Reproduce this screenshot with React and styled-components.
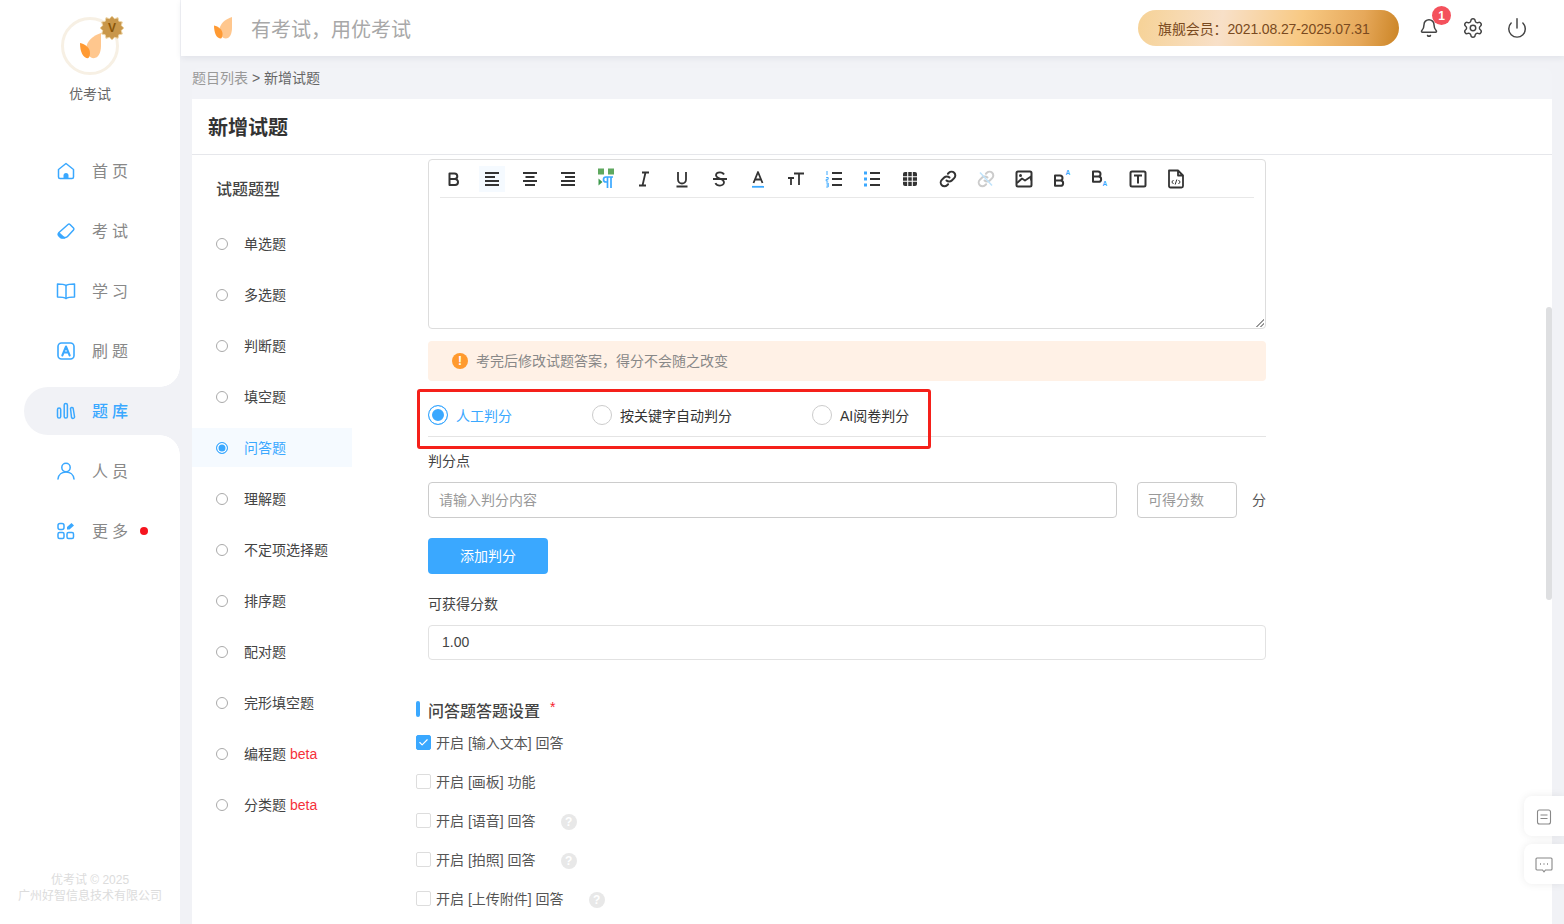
import React from 'react';
import styled, { createGlobalStyle } from 'styled-components';
import { Bell, Settings, Power, Check } from 'lucide-react';

const BLUE = '#3aa8ff';
const PAGE = '#f1f2f6';

const GlobalStyle = createGlobalStyle`
  html, body { margin: 0; padding: 0; height: 100%; background: ${PAGE}; }
  body { font-family: "Liberation Sans", "Noto Sans CJK SC", sans-serif; font-size: 14px; color: #333; overflow: hidden; }
  * { box-sizing: border-box; }
`;

const Page = styled.div`
  position: relative;
  display: flex;
  width: 100%;
  height: 924px;
  overflow: hidden;
  background: ${PAGE};
`;

/* the CJK face sits a little low, this lifts a label back onto its icon */
const Label = styled.span`
  padding-bottom: 2px;
`;

/* sidebar */
const Sidebar = styled.aside`
  width: 180px;
  flex: none;
  display: flex;
  flex-direction: column;
  background: #fff;
`;
const Brand = styled.div`
  display: flex;
  flex-direction: column;
  align-items: center;
  padding-top: 17px;
  height: 147px;
`;
const Avatar = styled.div`
  position: relative;
  width: 58px;
  height: 58px;
  border: 3px solid #f7f0e4;
  border-radius: 50%;
  display: flex;
  align-items: center;
  justify-content: center;
`;
const VBadge = styled.div`
  position: absolute;
  top: -4px;
  right: -8px;
  width: 24px;
  height: 24px;
`;
const VLetter = styled.span`
  position: absolute;
  inset: 0;
  display: flex;
  align-items: center;
  justify-content: center;
  font-size: 12px;
  font-weight: 700;
  color: #8a5608;
`;
const BrandName = styled.div`
  margin-top: 9px;
  font-size: 14px;
  line-height: 20px;
  color: #666;
`;
const Nav = styled.nav`
  display: flex;
  flex-direction: column;
  gap: 12px;
  padding-left: 24px;
`;
const NavItem = styled.div`
  position: relative;
  height: 48px;
  display: flex;
  align-items: center;
  gap: 16px;
  padding-left: 32px;
  font-size: 16px;
  letter-spacing: 4px;
  color: ${(p) => (p.$active ? BLUE : '#888')};
  font-weight: ${(p) => (p.$active ? 500 : 400)};
  background: ${(p) => (p.$active ? PAGE : 'transparent')};
  border-radius: 24px 0 0 24px;
  ${(p) => p.$active && `
    &::before, &::after {
      content: '';
      position: absolute;
      right: 0;
      width: 20px;
      height: 20px;
    }
    &::before {
      top: -20px;
      background: radial-gradient(circle at 0 0, transparent 19.5px, ${PAGE} 20px);
    }
    &::after {
      bottom: -20px;
      background: radial-gradient(circle at 0 100%, transparent 19.5px, ${PAGE} 20px);
    }
  `}
`;
const NavDot = styled.i`
  width: 8px;
  height: 8px;
  border-radius: 50%;
  background: #f5141e;
  margin-left: -8px;
`;
const SideFoot = styled.div`
  margin-top: auto;
  padding-bottom: 20px;
  text-align: center;
  font-size: 12px;
  line-height: 16px;
  color: #dcdcdc;
`;

/* main column */
const Main = styled.div`
  flex: 1;
  min-width: 0;
  margin-left: 1px;
  display: flex;
  flex-direction: column;
`;
const Header = styled.header`
  height: 56px;
  flex: none;
  display: flex;
  align-items: center;
  padding: 0 36px 0 33px;
  background: #fff;
  box-shadow: 0 2px 6px rgba(40, 50, 80, 0.08);
  position: relative;
`;
const Slogan = styled.div`
  margin-left: 19px;
  font-size: 20px;
  color: #a8a8a8;
`;
const Member = styled.div`
  margin-left: auto;
  width: 261px;
  height: 36px;
  padding-left: 20px;
  display: flex;
  align-items: center;
  border-radius: 18px;
  font-size: 14px;
  letter-spacing: -0.12px;
  color: #7a4a20;
  background: linear-gradient(100deg, #f6d296 0%, #f8e0c8 32%, #f8c983 62%, #e6a85a 85%, #cb8425 100%);
`;
const HeadIcons = styled.div`
  display: flex;
  align-items: center;
  gap: 22px;
  margin-left: 19px;
  color: #444;
`;
const HeadIcon = styled.div`
  position: relative;
  width: 22px;
  height: 22px;
  display: flex;
  align-items: center;
  justify-content: center;
`;
const Count = styled.span`
  position: absolute;
  top: -11px;
  left: 14px;
  width: 19px;
  height: 19px;
  border-radius: 50%;
  background: #f4515c;
  color: #fff;
  font-size: 12px;
  font-weight: 700;
  display: flex;
  align-items: center;
  justify-content: center;
`;

const Crumbs = styled.div`
  margin: 12px 12px 0 11px;
  height: 31px;
  line-height: 20px;
  font-size: 14px;
  color: #666;
  border-radius: 8px 8px 0 0;
  background: #f2f3f7;
`;
const CrumbLink = styled.span`
  color: #999;
`;
const Card = styled.div`
  margin: 0 12px 0 11px;
  flex: 1;
  min-height: 0;
  display: flex;
  flex-direction: column;
  background: #fff;
`;
const CardTitle = styled.h1`
  margin: 0;
  height: 56px;
  flex: none;
  padding: 0 16px;
  display: flex;
  align-items: center;
  font-size: 20px;
  font-weight: 700;
  color: #333;
  border-bottom: 1px solid #e6e7eb;
`;
const CardBody = styled.div`
  flex: 1;
  min-height: 0;
  display: flex;
  overflow: hidden;
`;

/* question type list */
const Types = styled.div`
  width: 160px;
  flex: none;
`;
const TypesTitle = styled.div`
  height: 24px;
  margin: 23px 0 22px 24px;
  font-size: 16px;
  line-height: 24px;
  font-weight: 500;
  color: #444;
`;
const TypeRow = styled.div`
  height: 39px;
  margin-bottom: 12px;
  display: flex;
  align-items: center;
  padding-left: 24px;
  gap: 16px;
  font-size: 14px;
  color: ${(p) => (p.$active ? BLUE : '#444')};
  background: ${(p) => (p.$active ? '#f5faff' : 'transparent')};
`;
const TypeRadio = styled.i`
  width: 12px;
  height: 12px;
  flex: none;
  border-radius: 50%;
  border: 1px solid ${(p) => (p.$active ? BLUE : '#aaa')};
  background: ${(p) => (p.$active ? BLUE : '#fff')};
  box-shadow: ${(p) => (p.$active ? 'inset 0 0 0 1.5px #fff' : 'none')};
`;
const Beta = styled.span`
  color: #f5313a;
  margin-left: 4px;
`;

/* form column */
const Form = styled.div`
  width: 850px;
  margin-left: 64px;
  padding: 4px 0 0 12px;
  flex: none;
`;
const Editor = styled.div`
  position: relative;
  height: 170px;
  border: 1px solid #ddd;
  border-radius: 4px;
  padding: 0 11px;
`;
const Toolbar = styled.div`
  height: 38px;
  display: flex;
  align-items: center;
  gap: 12px;
  border-bottom: 1px solid #e8e8e8;
  padding-left: 1px;
`;
const ToolButton = styled.span`
  width: 26px;
  height: 26px;
  flex: none;
  display: flex;
  align-items: center;
  justify-content: center;
  background: ${(p) => (p.$hover ? '#f5faff' : 'transparent')};
`;
const Grip = styled.span`
  position: absolute;
  right: 1px;
  bottom: 1px;
  width: 8px;
  height: 8px;
  background: linear-gradient(135deg, transparent 50%, #999 50%, #999 60%, transparent 60%, transparent 75%, #999 75%, #999 85%, transparent 85%);
`;
const Notice = styled.div`
  margin-top: 12px;
  height: 40px;
  padding-left: 24px;
  display: flex;
  align-items: center;
  gap: 8px;
  border-radius: 4px;
  background: #fff1e6;
  color: #888;
`;
const NoticeMark = styled.i`
  width: 16px;
  height: 16px;
  border-radius: 50%;
  background: #ff9a2e;
  color: #fff;
  font-style: normal;
  font-weight: 700;
  font-size: 12px;
  display: flex;
  align-items: center;
  justify-content: center;
`;
const JudgeTabs = styled.div`
  position: relative;
  display: grid;
  grid-template-columns: 164px 220px 1fr;
  padding: 24px 0 11px;
  border-bottom: 1px solid #e4e4e4;
`;
const Judge = styled.label`
  display: flex;
  align-items: center;
  gap: 8px;
  height: 20px;
  color: ${(p) => (p.$active ? BLUE : '#333')};
`;
const JudgeRadio = styled.i`
  width: 20px;
  height: 20px;
  flex: none;
  border-radius: 50%;
  border: 1px solid ${(p) => (p.$active ? BLUE : '#ccc')};
  background: ${(p) => (p.$active ? BLUE : '#fff')};
  box-shadow: ${(p) => (p.$active ? 'inset 0 0 0 3px #fff' : 'none')};
`;
const RedFrame = styled.div`
  position: absolute;
  left: -11px;
  top: 8px;
  width: 514px;
  height: 60px;
  border: 3px solid #f5201a;
  border-radius: 3px;
  pointer-events: none;
`;
const FieldLabel = styled.div`
  margin-top: ${(p) => p.$top}px;
  line-height: 20px;
  color: #444;
`;
const InputRow = styled.div`
  margin-top: 11px;
  display: flex;
  align-items: center;
`;
const TextBox = styled.div`
  height: ${(p) => p.$h || 36}px;
  width: ${(p) => p.$w || 'auto'};
  margin-left: ${(p) => p.$left || 0}px;
  padding: 0 ${(p) => p.$pad || 10}px 2px;
  display: flex;
  align-items: center;
  border: 1px solid #ccc;
  border-radius: 4px;
  color: ${(p) => (p.$filled ? '#444' : '#999')};
  ${(p) => p.$filled && 'border-color: #e2e2e2;'}
`;
const Unit = styled.span`
  margin-left: auto;
  padding-bottom: 2px;
  color: #555;
`;
const AddButton = styled.button`
  display: block;
  margin-top: 20px;
  width: 120px;
  height: 36px;
  padding: 0 0 2px;
  border: 0;
  border-radius: 4px;
  background: ${BLUE};
  color: #fff;
  font: inherit;
`;
const SectionHead = styled.div`
  position: relative;
  margin-top: 39px;
  height: 22px;
  display: flex;
  align-items: center;
  font-size: 16px;
  font-weight: 500;
  color: #444;
  &::before {
    content: '';
    position: absolute;
    left: -12px;
    top: 2px;
    width: 4px;
    height: 16px;
    border-radius: 2px;
    background: ${BLUE};
  }
`;
const Star = styled.span`
  color: #f5222d;
  font-size: 14px;
  margin: -6px 0 0 10px;
`;
const Options = styled.div`
  margin: 2px 0 0 -12px;
`;
const OptionRow = styled.div`
  height: 39px;
  display: flex;
  align-items: center;
  color: #555;
`;
const Tick = styled.span`
  width: 15px;
  height: 15px;
  margin-right: 5px;
  flex: none;
  display: flex;
  align-items: center;
  justify-content: center;
  border-radius: 2px;
  border: 1px solid ${(p) => (p.$on ? BLUE : '#ddd')};
  background: ${(p) => (p.$on ? BLUE : '#fff')};
  color: #fff;
`;
const Help = styled.i`
  width: 16px;
  height: 16px;
  margin: 2px 0 0 25px;
  border-radius: 50%;
  background: #e8e8e8;
  color: #fff;
  font-style: normal;
  font-weight: 700;
  font-size: 12px;
  display: flex;
  align-items: center;
  justify-content: center;
`;

/* things lying over the page */
const ScrollThumb = styled.div`
  position: absolute;
  left: 1546px;
  top: 307px;
  width: 6px;
  height: 293px;
  border-radius: 3px;
  background: #dedfe1;
`;
const Floats = styled.div`
  position: absolute;
  right: 0;
  top: 796px;
  display: flex;
  flex-direction: column;
  gap: 8px;
`;
const FloatBtn = styled.div`
  width: 40px;
  height: 40px;
  padding-top: 2px;
  display: flex;
  align-items: center;
  justify-content: center;
  background: #fff;
  border-radius: 8px 0 0 8px;
  box-shadow: 0 0 8px rgba(0, 0, 0, 0.08);
`;

const Leaf = ({ size = 20 }) => (
  <svg width={size} height={size * 1.2} viewBox="0 0 20 24">
    <path d="M20 0C12 2.500 6.500 8 6 14 5.700 19 9 24 13 24 17.500 24 20 19 20 12Z" fill="#ffc78e" />
    <path d="M0 9.500C5 10.500 9.500 14 9.500 19 9.500 22 8.500 24 7.500 24 3 24 0 18 0 9.500Z" fill="#ff9a33" />
  </svg>
);

const VStar = () => {
  const pts = [];
  for (let i = 0; i < 24; i++) {
    const r = i % 2 ? 9.6 : 12;
    const a = (i * Math.PI) / 12;
    pts.push(`${(12 + r * Math.cos(a)).toFixed(2)},${(12 + r * Math.sin(a)).toFixed(2)}`);
  }
  return (
    <svg width="24" height="24" viewBox="0 0 24 24">
      <polygon points={pts.join(' ')} fill="#c9974a" stroke="#eed7ab" strokeWidth="1" />
    </svg>
  );
};

const NavSvg = ({ children }) => (
  <svg width="20" height="20" viewBox="0 0 20 20" fill="none" stroke={BLUE} strokeWidth="1.5" strokeLinecap="round" strokeLinejoin="round" style={{ flex: 'none' }}>
    {children}
  </svg>
);

const navIcons = {
  home: (
    <NavSvg>
      <path d="M2.500 8.500 10 2.500l7.500 6V16A1.500 1.500 0 0 1 16 17.500H4A1.500 1.500 0 0 1 2.500 16Z" />
      <path d="M7.500 17.500v-3a2.500 2.500 0 0 1 5 0v3Z" fill={BLUE} stroke="none" />
    </NavSvg>
  ),
  exam: (
    <NavSvg>
      <path d="M12 3.500a1.500 1.500 0 0 1 2 0l3.500 3.500a1.500 1.500 0 0 1 0 2l-6 6.500a3 3 0 0 1-2 1H6a3 3 0 0 1-2-1l-1-1a2 2 0 0 1 0-3Z" />
      <path d="M3 12l5.500 5H6a3 3 0 0 1-2-1l-1-1a2 2 0 0 1 0-3Z" fill={BLUE} />
    </NavSvg>
  ),
  study: (
    <NavSvg>
      <path d="M10 4.500C8 3 5 3 1.500 3v13c3.500 0 6.500 0 8.500 1.500 2-1.500 5-1.500 8.500-1.500V3C15 3 12 3 10 4.500Z" />
      <path d="M10 4.500v13" />
    </NavSvg>
  ),
  drill: (
    <NavSvg>
      <rect x="2" y="2" width="16" height="16" rx="3.500" strokeWidth="1.600" />
      <path d="M6.300 14.500 10 5.500l3.700 9M7.500 11.500h5" strokeWidth="2" />
    </NavSvg>
  ),
  bank: (
    <NavSvg>
      <rect x="1.500" y="7" width="3.200" height="10" rx="1.600" />
      <rect x="8.200" y="2.500" width="3.200" height="14.500" rx="1.600" />
      <path d="M14.500 7.500a1.500 1.500 0 0 1 2.600-.5l1.400 8.500a1.500 1.500 0 0 1-3 .8Z" />
    </NavSvg>
  ),
  people: (
    <NavSvg>
      <circle cx="10" cy="6.500" r="4.200" />
      <path d="M2 18c.5-4.500 4-7 8-7s7.500 2.500 8 7" />
    </NavSvg>
  ),
  more: (
    <NavSvg>
      <rect x="2" y="2.500" width="6" height="6" rx="2" />
      <rect x="2" y="11.500" width="6" height="6" rx="1.500" />
      <rect x="11" y="11.500" width="6.500" height="6" rx="1.500" />
      <path d="M11 8.500V6l4.500-4 2.500 2.500-4.500 4Z" fill={BLUE} stroke="none" />
    </NavSvg>
  ),
};

const navItems = [
  { key: 'home', label: '首页' },
  { key: 'exam', label: '考试' },
  { key: 'study', label: '学习' },
  { key: 'drill', label: '刷题' },
  { key: 'bank', label: '题库', active: true },
  { key: 'people', label: '人员' },
  { key: 'more', label: '更多', dot: true },
];

const types = [
  { label: '单选题' },
  { label: '多选题' },
  { label: '判断题' },
  { label: '填空题' },
  { label: '问答题', active: true },
  { label: '理解题' },
  { label: '不定项选择题' },
  { label: '排序题' },
  { label: '配对题' },
  { label: '完形填空题' },
  { label: '编程题', beta: true },
  { label: '分类题', beta: true },
];

const options = [
  { label: '开启 [输入文本] 回答', on: true },
  { label: '开启 [画板] 功能' },
  { label: '开启 [语音] 回答', help: true },
  { label: '开启 [拍照] 回答', help: true },
  { label: '开启 [上传附件] 回答', help: true },
];

const Tool = ({ children, hover, color = '#333' }) => (
  <ToolButton $hover={hover}>
    <svg width="22" height="22" viewBox="0 0 22 22" fill="none" stroke={color} strokeWidth="1.800" strokeLinejoin="round">
      {children}
    </svg>
  </ToolButton>
);

const toolbar = (
  <Toolbar>
    <Tool><path d="M6.500 5.500h5a2.800 2.800 0 0 1 0 5.600h-5Zm0 5.600h5.600a2.900 2.900 0 0 1 0 5.800H6.500Z" strokeWidth="2" /></Tool>
    <Tool hover><path d="M4 5h14M4 9h10M4 13h14M4 17h14" /></Tool>
    <Tool><path d="M4 5h14M6.500 9h9M4 13h14M6 17h10" /></Tool>
    <Tool><path d="M4 5h14M8 9h10M4 13h14M4 17h14" /></Tool>
    <Tool>
      <rect x="3" y="0.500" width="6" height="6" fill="#5fa85f" stroke="none" />
      <rect x="13" y="0.500" width="6" height="6" fill="#5fa85f" stroke="none" />
      <path d="M3.500 10.500v7l4-3.500Z" fill="#3f9a4f" stroke="none" />
      <path d="M12.500 9h-1.500a2.500 2.500 0 0 0 0 5h1.500ZM12.500 9v11M16 9v11M11 9h7" stroke={BLUE} strokeWidth="1.700" />
    </Tool>
    <Tool><path d="M9 4.500h7M6 17.500h7M12.500 4.500l-3 13" /></Tool>
    <Tool><path d="M7 4v7.500a4 4 0 0 0 8 0V4M5.500 18.500h11" /></Tool>
    <Tool><path d="M15 6.500C14.300 5 12.800 4.300 11 4.300c-2.500 0-4 1.300-4 3 0 3.500 8 3 8 7 0 1.900-1.800 3.300-4 3.300-2 0-3.800-.8-4.600-2.500M4 11h14" /></Tool>
    <Tool>
      <path d="M6.500 15 11 4l4.500 11M8 11.500h6" />
      <path d="M5 18.800h12" stroke={BLUE} />
    </Tool>
    <Tool><path d="M9 5.500h10M14 5.500V17M3 10h6M6 10v7" /></Tool>
    <Tool>
      <path d="M9 5h10M9 11h10M9 17h10" />
      <path d="M4 3v4M3.200 9.500h2v1.800h-2v1.800h2M3.200 15h2v4h-2M3.500 17h1.700" stroke={BLUE} strokeWidth="1" />
    </Tool>
    <Tool>
      <path d="M9 5h10M9 11h10M9 17h10" />
      <rect x="3" y="3.500" width="3" height="3" fill={BLUE} stroke="none" />
      <rect x="3" y="9.500" width="3" height="3" fill={BLUE} stroke="none" />
      <rect x="3" y="15.500" width="3" height="3" fill={BLUE} stroke="none" />
    </Tool>
    <Tool>
      <rect x="4" y="4" width="14" height="14" rx="2" fill="#333" stroke="none" />
      <path d="M8.700 4v14M13.300 4v14M4 8.700h14M4 13.300h14" stroke="#fff" strokeWidth="1.100" />
    </Tool>
    <Tool>
      <path d="M9.500 12.500a3.700 3.700 0 0 0 5.300 0l2.400-2.400a3.700 3.700 0 0 0-5.300-5.300l-1 1" strokeWidth="2" strokeLinecap="round" />
      <path d="M12.500 9.500a3.700 3.700 0 0 0-5.300 0l-2.400 2.400a3.700 3.700 0 0 0 5.300 5.300l1-1" strokeWidth="2" strokeLinecap="round" />
    </Tool>
    <Tool color="#ccc">
      <path d="M9.500 12.500a3.700 3.700 0 0 0 5.300 0l2.400-2.400a3.700 3.700 0 0 0-5.300-5.300l-1 1" strokeWidth="2" strokeLinecap="round" />
      <path d="M12.500 9.500a3.700 3.700 0 0 0-5.300 0l-2.400 2.400a3.700 3.700 0 0 0 5.300 5.300l1-1" strokeWidth="2" strokeLinecap="round" />
      <path d="M5 4.500l12 13" stroke="#bfe3fb" strokeWidth="1.500" />
    </Tool>
    <Tool>
      <rect x="3.500" y="3.500" width="15" height="15" rx="1.500" strokeWidth="2" />
      <circle cx="7.500" cy="7.500" r="1.500" fill="#333" stroke="none" />
      <path d="M4 15l5-4.500 3 2 6-4v4" />
    </Tool>
    <Tool>
      <path d="M4 7.500h5a2.500 2.500 0 0 1 0 5H4Zm0 5h5.500a2.600 2.600 0 0 1 0 5.300H4Z" strokeWidth="2" />
      <text x="14.500" y="7" fontSize="6.500" fontWeight="700" fill={BLUE} stroke="none">A</text>
    </Tool>
    <Tool>
      <path d="M4 3.500h5a2.500 2.500 0 0 1 0 5H4Zm0 5h5.500a2.600 2.600 0 0 1 0 5.300H4Z" strokeWidth="2" />
      <text x="13.500" y="18" fontSize="6.500" fontWeight="700" fill={BLUE} stroke="none">A</text>
    </Tool>
    <Tool>
      <rect x="3.500" y="3.500" width="15" height="15" rx="1.500" strokeWidth="2" />
      <path d="M7 7.500h8M11 7.500V15.500" strokeWidth="2" />
    </Tool>
    <Tool>
      <path d="M4 2.500h9l5 5V18a1.500 1.500 0 0 1-1.500 1.500h-11A1.500 1.500 0 0 1 4 18ZM13 2.500v5h5" strokeWidth="1.800" />
      <path d="M8.500 12 6.800 14l1.700 2M13.500 12l1.700 2-1.700 2M11.800 11.500l-1.600 5" strokeWidth="1" />
    </Tool>
  </Toolbar>
);

export default function App() {
  return (
    <>
      <GlobalStyle />
      <Page>
        <Sidebar>
          <Brand>
            <Avatar>
              <Leaf size={21} />
              <VBadge>
                <VStar />
                <VLetter>V</VLetter>
              </VBadge>
            </Avatar>
            <BrandName>优考试</BrandName>
          </Brand>
          <Nav>
            {navItems.map((item) => (
              <NavItem key={item.key} $active={item.active}>
                {navIcons[item.key]}
                <Label>{item.label}</Label>
                {item.dot && <NavDot />}
              </NavItem>
            ))}
          </Nav>
          <SideFoot>
            优考试 © 2025
            <br />
            广州好智信息技术有限公司
          </SideFoot>
        </Sidebar>

        <Main>
          <Header>
            <Leaf size={18} />
            <Slogan>有考试，用优考试</Slogan>
            <Member>旗舰会员：2021.08.27-2025.07.31</Member>
            <HeadIcons>
              <HeadIcon>
                <Bell size={20} strokeWidth={1.8} />
                <Count>1</Count>
              </HeadIcon>
              <HeadIcon><Settings size={22} strokeWidth={1.6} /></HeadIcon>
              <HeadIcon><Power size={24} strokeWidth={1.6} /></HeadIcon>
            </HeadIcons>
          </Header>

          <Crumbs>
            <CrumbLink>题目列表</CrumbLink> &gt; 新增试题
          </Crumbs>
          <Card>
            <CardTitle>新增试题</CardTitle>
            <CardBody>
              <Types>
                <TypesTitle>试题题型</TypesTitle>
                {types.map((t) => (
                  <TypeRow key={t.label} $active={t.active}>
                    <TypeRadio $active={t.active} />
                    <Label>
                      {t.label}
                      {t.beta && <Beta>beta</Beta>}
                    </Label>
                  </TypeRow>
                ))}
              </Types>

              <Form>
                <Editor>
                  {toolbar}
                  <Grip />
                </Editor>
                <Notice>
                  <NoticeMark>!</NoticeMark>
                  <Label>考完后修改试题答案，得分不会随之改变</Label>
                </Notice>
                <JudgeTabs>
                  <Judge $active>
                    <JudgeRadio $active />
                    人工判分
                  </Judge>
                  <Judge>
                    <JudgeRadio />
                    按关键字自动判分
                  </Judge>
                  <Judge>
                    <JudgeRadio />
                    AI阅卷判分
                  </Judge>
                  <RedFrame />
                </JudgeTabs>
                <FieldLabel $top={14}>判分点</FieldLabel>
                <InputRow>
                  <TextBox $w="689px">请输入判分内容</TextBox>
                  <TextBox $w="100px" $left={20}>可得分数</TextBox>
                  <Unit>分</Unit>
                </InputRow>
                <AddButton>添加判分</AddButton>
                <FieldLabel $top={20}>可获得分数</FieldLabel>
                <InputRow>
                  <TextBox $w="100%" $h={35} $pad={13} $filled>1.00</TextBox>
                </InputRow>
                <SectionHead>
                  问答题答题设置
                  <Star>*</Star>
                </SectionHead>
                <Options>
                  {options.map((o) => (
                    <OptionRow key={o.label}>
                      <Tick $on={o.on}>{o.on && <Check size={11} strokeWidth={2.500} />}</Tick>
                      <Label>{o.label}</Label>
                      {o.help && <Help>?</Help>}
                    </OptionRow>
                  ))}
                </Options>
              </Form>
            </CardBody>
          </Card>
        </Main>

        <ScrollThumb />
        <Floats>
          <FloatBtn>
            <svg width="16" height="16" viewBox="0 0 16 16" fill="none" stroke="#888" strokeWidth="1.100">
              <rect x="1.500" y="1" width="13" height="14" rx="2" />
              <path d="M4.500 6h7M4.500 9.500h7" />
            </svg>
          </FloatBtn>
          <FloatBtn>
            <svg width="18" height="16" viewBox="0 0 18 16" fill="none" stroke="#888" strokeWidth="1.100">
              <path d="M2 1h14a1 1 0 0 1 1 1v10a1 1 0 0 1-1 1h-5.500L9 14.800 7.500 13H2a1 1 0 0 1-1-1V2a1 1 0 0 1 1-1Z" />
              <path d="M5 7h1M8.500 7h1M12 7h1" strokeWidth="1.500" />
            </svg>
          </FloatBtn>
        </Floats>
      </Page>
    </>
  );
}
